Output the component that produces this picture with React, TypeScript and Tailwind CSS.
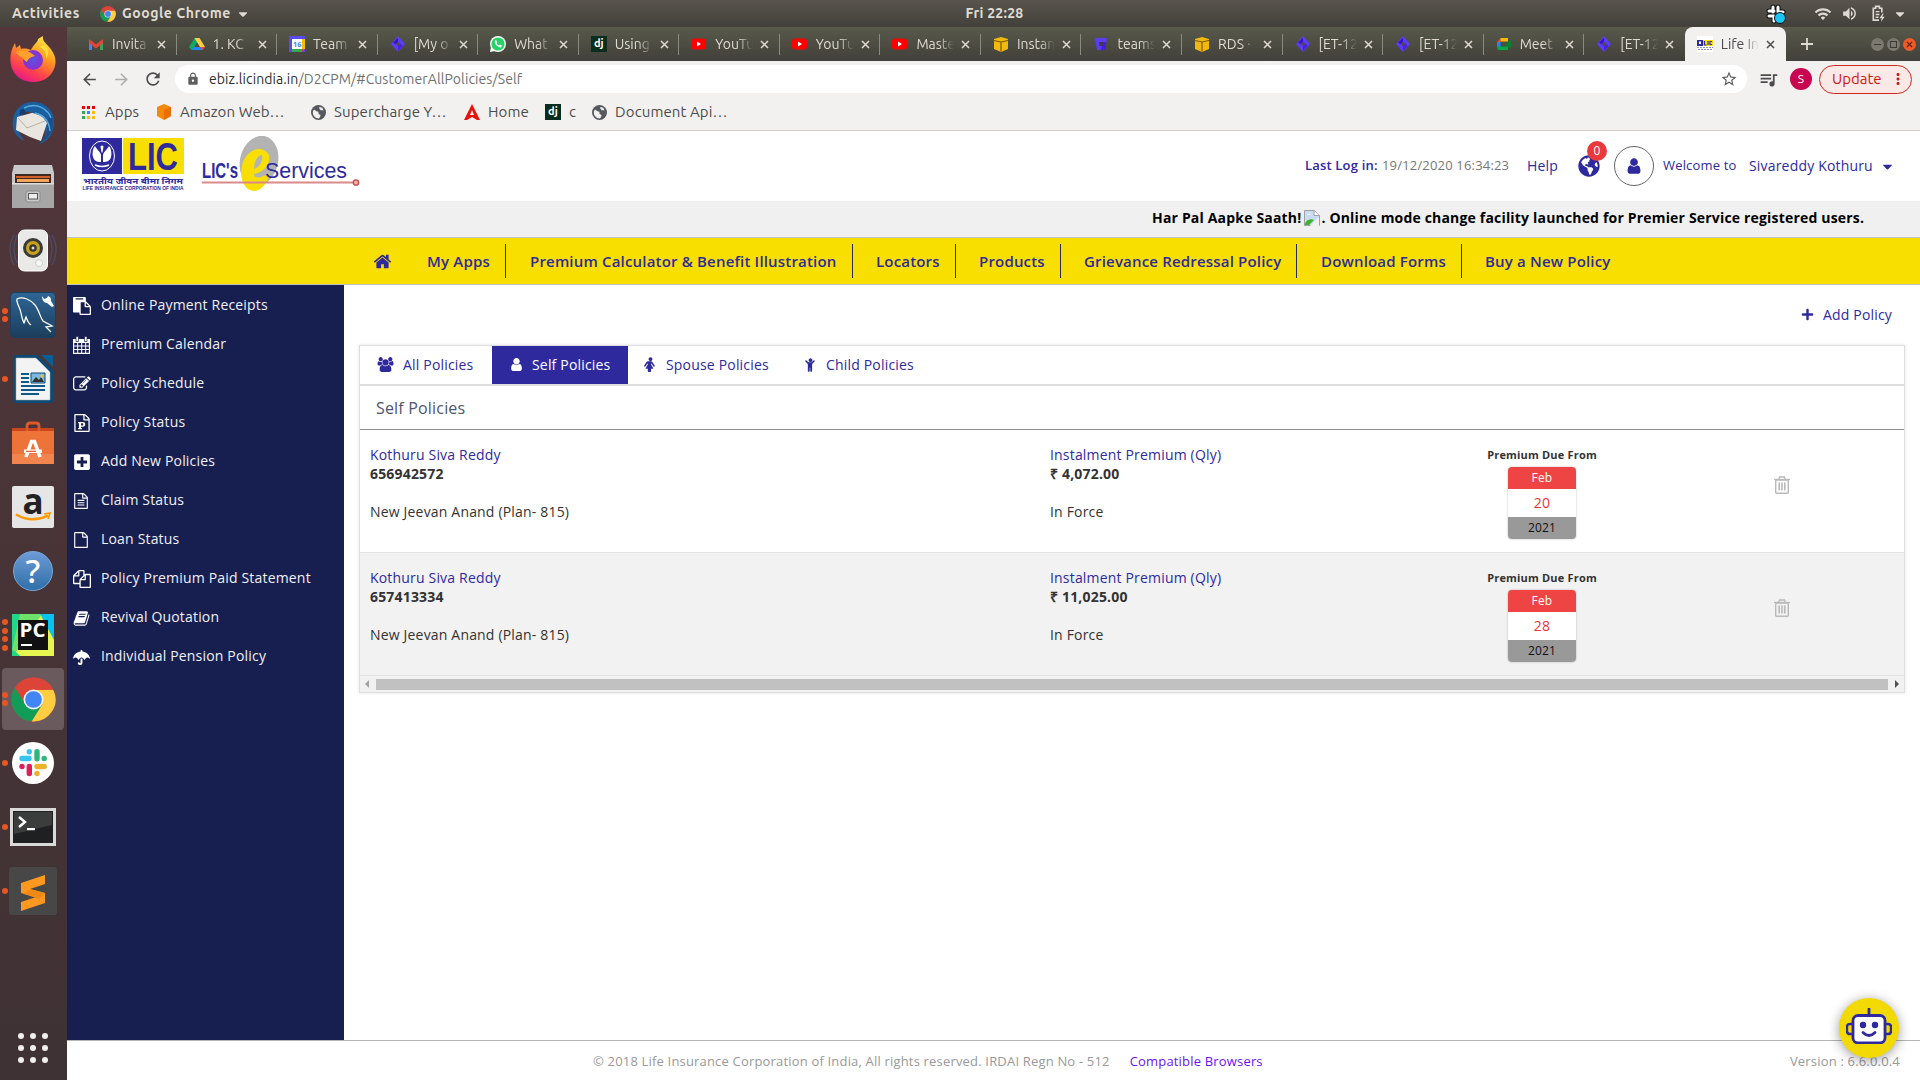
import React from "react";
import { FaUmbrella, FaPlusSquare, FaPlus, FaGlobeAmericas, FaCaretDown } from "react-icons/fa";
import { MdLock, MdStarBorder, MdQueueMusic, MdMoreVert, MdArrowBack, MdArrowForward, MdRefresh, MdWifi, MdVolumeUp } from "react-icons/md";

const UI = "font-['Ubuntu','Noto_Sans',sans-serif]";
const PAGE = "font-['Open_Sans','Noto_Sans_CJK_SC',sans-serif]";

/* ---------- shared 1792-grid glyphs ---------- */
const glyphs = {
  book: "M1703 478q40 57 18 129l-275 906q-19 64-76.500 107.500t-122.500 43.500h-923q-77 0-148.500-53.500t-99.500-131.500q-24-67-2-127 0-4 3-27t4-37q1-8-3-21.500t-3-19.500q2-11 8-21t16.500-23.500 16.500-23.500q23-38 45-91.500t30-91.500q3-10 .5-30t-.5-28q3-11 17-28t17-23q21-36 42-92t25-90q1-9-2.500-32t.5-28q4-13 22-30.500t22-22.500q19-26 42.500-84.500t27.500-96.500q1-8-3-25.500t-2-26.500q2-8 9-18t18-23 17-21q8-12 16.500-30.500t15-35 16-36 19.500-32 26.500-23.500 36-11.500 47.500 5.500l-1 3q38-9 51-9h761q74 0 114 56t18 130l-274 906q-36 119-71.500 153.500t-128.500 34.500h-869q-27 0-38 15-11 16-1 43 24 70 144 70h923q29 0 56-15.500t35-41.500l300-987q7-22 5-57 38 15 59 43zm-1064 2q-4 13 2 22.500t20 9.500h608q13 0 25.500-9.500t16.500-22.500l21-64q4-13-2-22.500t-20-9.500h-608q-13 0-25.500 9.500t-16.500 22.500zm-83 256q-4 13 2 22.500t20 9.500h608q13 0 25.500-9.500t16.500-22.500l21-64q4-13-2-22.500t-20-9.500h-608q-13 0-25.500 9.500t-16.500 22.500z",
  file: "M1596 380q28 28 48 76t20 88v1152q0 40-28 68t-68 28h-1344q-40 0-68-28t-28-68v-1600q0-40 28-68t68-28h896q40 0 88 20t76 48zm-444-244v376h376q-10-29-22-41l-313-313q-12-12-41-22zm384 1528v-1024h-416q-40 0-68-28t-28-68v-416h-768v1536h1280z",
  fileText: "M1596 380q28 28 48 76t20 88v1152q0 40-28 68t-68 28h-1344q-40 0-68-28t-28-68v-1600q0-40 28-68t68-28h896q40 0 88 20t76 48zm-444-244v376h376q-10-29-22-41l-313-313q-12-12-41-22zm384 1528v-1024h-416q-40 0-68-28t-28-68v-416h-768v1536h1280zm-1024-864q0-14 9-23t23-9h704q14 0 23 9t9 23v64q0 14-9 23t-23 9h-704q-14 0-23-9t-9-23v-64zm736 224q14 0 23 9t9 23v64q0 14-9 23t-23 9h-704q-14 0-23-9t-9-23v-64q0-14 9-23t23-9h704zm0 256q14 0 23 9t9 23v64q0 14-9 23t-23 9h-704q-14 0-23-9t-9-23v-64q0-14 9-23t23-9h704z",
  copy: "M1696 384q40 0 68 28t28 68v1216q0 40-28 68t-68 28h-960q-40 0-68-28t-28-68v-288h-544q-40 0-68-28t-28-68v-672q0-40 20-88t48-76l408-408q28-28 76-48t88-20h416q40 0 68 28t28 68v328q68-40 128-40h416zm-544 213l-299 299h299v-299zm-640-384l-299 299h299v-299zm196 647l316-316v-416h-384v416q0 40-28 68t-68 28h-416v640h512v-256q0-40 20-88t48-76zm956 804v-1152h-384v416q0 40-28 68t-68 28h-416v640h896z",
  paste: "M768 1664h896v-640h-416q-40 0-68-28t-28-68v-416h-384v1152zm256-1440v-64q0-13-9.500-22.500t-22.500-9.500h-704q-13 0-22.500 9.500t-9.500 22.500v64q0 13 9.500 22.500t22.500 9.500h704q13 0 22.500-9.500t9.500-22.500zm256 672h299l-299-299v299zm512 128v672q0 40-28 68t-68 28h-960q-40 0-68-28t-28-68v-160h-544q-40 0-68-28t-28-68v-1344q0-40 28-68t68-28h1088q40 0 68 28t28 68v328q21 13 36 28l408 408q28 28 48 76t20 88z",
  edit: "M888 1184l116-116-152-152-116 116v56h96v96h56zm440-720q-16-16-33 1l-350 350q-17 17-1 33t33-1l350-350q17-17 1-33zm80 594v190q0 119-84.500 203.500t-203.500 84.500h-832q-119 0-203.500-84.500t-84.500-203.500v-832q0-119 84.500-203.500t203.500-84.500h832q63 0 117 25 15 7 18 23 3 17-9 29l-49 49q-14 14-32 8-23-6-45-6h-832q-66 0-113 47t-47 113v832q0 66 47 113t113 47h832q66 0 113-47t47-113v-126q0-13 9-22l64-64q15-15 35-7t20 29zm-96-738l288 288-672 672h-288v-288zm444 132l-92 92-288-288 92-92q28-28 68-28t68 28l152 152q28 28 28 68t-28 68z",
  user: "M1536 1399q0 109-62.500 187t-150.500 78h-854q-88 0-150.500-78t-62.500-187q0-85 8.500-160.500t31.500-152 58.500-131 94-89 134.500-34.500q131 128 313 128t313-128q76 0 134.500 34.500t94 89 58.500 131 31.500 152 8.500 160.500zm-256-887q0 159-112.500 271.500t-271.500 112.500-271.500-112.500-112.500-271.500 112.500-271.500 271.500-112.500 271.500 112.500 112.500 271.500z",
  female: "M1408 1056q0 40-28 68t-68 28q-51 0-80-43l-227-341h-45v132l247 411q9 15 9 33 0 26-19 45t-45 19h-192v272q0 46-33 79t-79 33h-160q-46 0-79-33t-33-79v-272h-192q-26 0-45-19t-19-45q0-18 9-33l247-411v-132h-45l-227 341q-29 43-80 43-40 0-68-28t-28-68q0-29 16-53l256-384q73-107 176-107h384q103 0 176 107l256 384q16 24 16 53zm-288-800q0 93-65.500 158.500t-158.500 65.500-158.500-65.500-65.500-158.500 65.500-158.500 158.500-65.500 158.500 65.500 65.500 158.500z",
  child: "M1380 548l-292 292v824q0 46-33 79t-79 33-79-33-33-79v-384h-64v384q0 46-33 79t-79 33-79-33-33-79v-824l-292-292q-28-28-28-68t28-68q29-28 68.500-28t67.500 28l228 228h368l228-228q28-28 68-28t68 28q28 29 28 68.500t-28 67.500zm-260-164q0 93-65.500 158.500t-158.500 65.500-158.500-65.500-65.500-158.500 65.500-158.500 158.500-65.500 158.500 65.500 65.500 158.500z",
  users: "M657 896q-162 5-265 128h-134q-82 0-138-40.500t-56-118.500q0-353 124-353 6 0 43.500 21t97.500 42.500 119 21.500q67 0 133-23-5 37-5 66 0 159 90 283zm1071 637q0 120-73 189.500t-194 69.500h-874q-121 0-194-69.500t-73-189.500q0-53 3.500-103.500t14-109 26.500-108.500 43-97.500 62-81 85.500-53.500 111.500-20q10 0 43 21.500t73 48 107 48 135 21.500 135-21.500 107-48 73-48 43-21.500q61 0 111.500 20t85.500 53.500 62 81 43 97.500 26.500 108.500 14 109 3.500 103.500zm-1024-1277q0 106-75 181t-181 75-181-75-75-181 75-181 181-75 181 75 75 181zm704 384q0 159-112.500 271.500t-271.500 112.500-271.500-112.500-112.500-271.500 112.500-271.500 271.500-112.500 271.500 112.500 112.500 271.500zm576 225q0 78-56 118.500t-138 40.500h-134q-103-123-265-128 90-124 90-283 0-29-5-66 66 23 133 23 59 0 119-21.500t97.500-42.500 43.500-21q124 0 124 353zm-128-609q0 106-75 181t-181 75-181-75-75-181 75-181 181-75 181 75 75 181z",
  home: "M1472 992v480q0 26-19 45t-45 19h-384v-384h-256v384h-384q-26 0-45-19t-19-45v-480q0-1 .5-3t.5-3l575-474 575 474q1 2 1 6zm223-69l-62 74q-8 9-21 11h-3q-13 0-21-7l-692-577-692 577q-12 8-24 7-13-2-21-11l-62-74q-8-10-7-23.500t11-21.500l719-599q32-26 76-26t76 26l244 204v-195q0-14 9-23t23-9h192q14 0 23 9t9 23v408l219 182q10 8 11 21.500t-7 23.500z",
};
const Glyph = ({ d, className = "", box = "0 0 1792 1792" }: { d: string; className?: string; box?: string }) => (
  <svg viewBox={box} fill="currentColor" className={className}><path d={d} /></svg>
);

const T = ({ className = "", children }: { className?: string; children: React.ReactNode }) => (
  <span className={"whitespace-nowrap " + className}>{children}</span>
);

/* ---------- GNOME top bar ---------- */
const ChromeLogo = ({ className = "" }: { className?: string }) => (
  <svg viewBox="0 0 48 48" className={className}>
    <circle cx="24" cy="24" r="23.500" fill="#db4437" />
    <path d="M24 24 4.100 11.500A23.500 23.500 0 0 0 22 47.400L34 30z" fill="#0f9d58" />
    <path d="M24 13.500H45A23.500 23.500 0 0 1 22 47.400L33.500 29z" fill="#ffcd40" />
    <path d="M4.100 11.500A23.500 23.500 0 0 1 45 13.500H24L14 27z" fill="#db4437" />
    <circle cx="24" cy="24" r="10.700" fill="#f1f1f1" />
    <circle cx="24" cy="24" r="8.900" fill="#4285f4" />
  </svg>
);

const TopBar = () => (
  <div className={`${UI} relative flex h-[27px] shrink-0 items-center bg-linear-to-b from-[#59554d] to-[#42403a] text-[14px] font-bold tracking-[0.55px] text-[#dfdbd2]`}>
    <div className="w-[100px] pl-3"><T>Activities</T></div>
    <ChromeLogo className="size-4" />
    <div className="ml-[6px]"><T>Google Chrome</T></div>
    <FaCaretDown className="ml-[5px] size-[14px]" />
    <div className="absolute inset-x-0 flex justify-center pl-[69px] tracking-[0.25px]"><T>Fri 22:28</T></div>
    <div className="ml-auto flex items-center pr-[13px]">
      <svg viewBox="0 0 20 20" className="mr-[28px] size-5">
        <g stroke="#111" strokeWidth="5" strokeLinecap="round"><path d="M7 3v5M3 12h5M12 3v5M8 13v4M13 8h4M3 7h5" /></g>
        <g stroke="#fff" strokeWidth="3" strokeLinecap="round"><path d="M7 3v5M3 12h5M12 3v5M8 13v4M13 8h4M3 7h5" /></g>
        <circle cx="14" cy="14" r="5.500" fill="#1bc5f5" stroke="#111" />
      </svg>
      <MdWifi className="mr-[9px] size-[18px]" />
      <MdVolumeUp className="mr-[13px] size-[17px]" />
      <svg viewBox="0 0 15 18" className="mr-[7px] h-[17px] w-[15px]" fill="none" stroke="currentColor">
        <path d="M11 8V3.500H8.500V1.500h-4v2H2V16h6" strokeWidth="1.700" /><path d="M4.500 7h4M4.500 10h4M4.500 13h3" strokeWidth="1.500" />
        <path d="m12 9-3.500 5h2.500l-1 4 4-5.500h-2.500l1.500-3.500z" fill="currentColor" stroke="none" />
      </svg>
      <FaCaretDown className="size-[14px]" />
    </div>
  </div>
);

/* ---------- dock ---------- */
const Firefox = () => (
  <svg viewBox="0 0 48 48" className="size-[48px]">
    <defs>
      <linearGradient id="ffo" x1=".8" y1="0" x2=".3" y2="1"><stop offset="0" stopColor="#fff14a" /><stop offset=".4" stopColor="#ff9a1f" /><stop offset=".75" stopColor="#ff4050" /><stop offset="1" stopColor="#e3168a" /></linearGradient>
      <radialGradient id="ffp"><stop offset="0" stopColor="#5b52e0" /><stop offset="1" stopColor="#8b2fd0" /></radialGradient>
    </defs>
    <path d="M34 1C33 6 37 8 41 13c4 5 6 10 5.500 15C45 40 36 47 24 47 11 47 2 38 1.500 26 1 19 3 13 6 8l1 5 4-3 1 4c4-1 8 0 10 1 2-5 7-8 7-11z" fill="url(#ffo)" />
    <circle cx="24" cy="25" r="10" fill="url(#ffp)" />
    <path d="M7 17c5-3 12-1 15 1l4 3c-5 1-7 3-8 6-2-1-4-3-5-5-2 0-5-3-6-5z" fill="#ffa12b" />
    <path d="M30 12c5 1 8 6 7 12 3-4 3-9-1-14z" fill="#ffdd3c" />
  </svg>
);
const Thunderbird = () => (
  <svg viewBox="0 0 48 48" className="size-[48px]">
    <path d="M4 20C6 9 14 2 26 3c12 1 20 10 19 22-1 11-7 18-15 20 6-5 7-10 6-17L22 10C14 13 8 20 9 30c1 5 4 9 7 12C7 39 2 30 4 20z" fill="#1d5f9e" />
    <path d="m8 18 22-6 8 12-6 18-11-4L7 31z" fill="#e9e6e0" />
    <path d="m9 19 9 10 18-7" fill="none" stroke="#b5b0a8" />
    <path d="M12 11C17 2 30 1 38 8c8 8 8 20 3 28 0-11-4-18-14-21-6-2-11-3-15-4z" fill="#1b5e9f" />
    <path d="M41 14c6 10 3 24-11 31 7-7 9-14 8-21z" fill="#1a5089" />
    <path d="M15 9c7-4 18-3 23 4M26 14c9 2 14 8 15 18M20 7c9-2 19 3 22 12" fill="none" stroke="#54a6dc" strokeWidth="1.500" />
    <path d="m11 11 4-1 2 5-6 1z" fill="#123e70" />
  </svg>
);
const Files = () => (
  <svg viewBox="0 0 44 44" className="size-[44px]">
    <path d="M3 0h38l2 8v35H1V8z" fill="#c8c8c8" />
    <path d="M4 9h36v9H4z" fill="#3f2a20" /><path d="M5 11h34v2H5z" fill="#d2602a" /><path d="M6 14h32v3H6z" fill="#f2a35c" />
    <path d="M1 18h42v25H1z" fill="#a6a6a6" /><path d="M1 18h42v1.500H1z" fill="#ddd" />
    <rect x="15" y="26" width="14" height="11" rx="2" fill="#c9c9c9" stroke="#8b8b8b" />
    <rect x="17.500" y="28.500" width="9" height="5.500" fill="#eee" stroke="#555" />
  </svg>
);
const Speaker = () => (
  <svg viewBox="0 0 48 48" className="size-[48px]">
    <g fill="none" stroke="#4c5f8d" strokeWidth="1.500" opacity=".5"><path d="M5 8q-8 14 0 30M8 8q-6 14 0 28M43 8q8 14 0 30M40 8q6 14 0 28" /></g>
    <rect x="9.500" y="3" width="29" height="41" rx="6" fill="#e9e9e7" stroke="#fff" />
    <circle cx="24" cy="21" r="10" fill="#3a3a38" /><circle cx="24" cy="21" r="7" fill="#c9a21c" /><circle cx="24" cy="21" r="3.800" fill="#333" /><circle cx="24" cy="21" r="1.500" fill="#ddd" />
    <circle cx="30" cy="36" r="3.500" fill="#f7f7f7" stroke="#ccc" />
  </svg>
);
const Workbench = () => (
  <svg viewBox="0 0 46 46" className="size-[46px]">
    <defs><linearGradient id="wb" x2="0" y2="1"><stop stopColor="#2e6696" /><stop offset="1" stopColor="#1c3e5c" /></linearGradient></defs>
    <rect x=".5" y=".5" width="45" height="45" rx="4" fill="url(#wb)" stroke="#1c3f5f" />
    <path d="M21 33c-3-2-4-5-5-8-1 2-1 4-2 6-3-5-2-10-5-16-1-3-3-5-2-8 6-3 14 1 18 6 4 5 5 12 8 16l9 5-6 1 5 5" fill="none" stroke="#fff" strokeWidth="1.300" />
    <path d="m32 4 2 3 3-1 1-2c3 1 3 3 3 5l3 5-2 1-5-4c-3 0-5-3-5-7z" fill="#fff" />
  </svg>
);
const Writer = () => (
  <svg viewBox="0 0 40 48" className="h-[48px] w-[40px]">
    <path d="M3 0h21l16 15v30a3 3 0 0 1-3 3H3a3 3 0 0 1-3-3V3a3 3 0 0 1 3-3z" fill="#0c4a78" />
    <path d="M28 0h12v12z" fill="#0a5c95" /><path d="M3 3h20l14 14v28H3z" fill="#f3f3f3" stroke="#aaa" strokeWidth=".5" />
    <path d="M8 18h8v2H8zM8 22h8v2H8zM8 26h8v2H8zM8 30h24v2H8zM8 34h24v2H8zM8 38h18v2H8z" fill="#0c5a8d" />
    <path d="M18 18h14v10H18z" fill="#7db9df" stroke="#0c4a78" /><path d="m19 27 4-5 3 3 2-3 3 5z" fill="#333" /><circle cx="29" cy="21" r="1.500" fill="#f8c03a" />
  </svg>
);
const Software = () => (
  <svg viewBox="0 0 42 44" className="h-[44px] w-[42px]">
    <path d="M0 7h42v4H0z" fill="#c8461d" /><path d="M15 13V5q0-3 3-3h6q3 0 3 3v8" fill="none" stroke="#dd5a28" strokeWidth="2.800" />
    <path d="M0 10h42v33H0z" fill="#ee7338" /><path d="M0 33h42v10H0z" fill="#f2844d" />
    <path d="m14 36 5.500-15.500h3L28 36" fill="none" stroke="#fff" strokeWidth="3.600" /><path d="M12 28.500h18v3.500H12z" fill="#fff" /><path d="M14 29.700h10v1.300H14z" fill="#e9612b" />
  </svg>
);
const Amazon = () => (
  <div className="relative flex size-[42px] justify-center rounded-[2px] bg-[#e6e6e6] font-['Open_Sans',sans-serif] text-[35px] leading-[30px] font-bold text-[#222]">
    a
    <svg viewBox="0 0 42 42" className="absolute inset-0 size-[42px]"><path d="M4 28.500q16 9 32 1" fill="none" stroke="#f90" strokeWidth="2.500" /><path d="m32 28 6-1-2 6" fill="none" stroke="#f90" strokeWidth="1.700" /></svg>
  </div>
);
const Help = () => (
  <div className="flex size-[40px] items-center justify-center rounded-full border border-[#79a7d8] bg-linear-to-b from-[#6c9bd6] to-[#2f6fa8] font-['Noto_Sans',sans-serif] text-[33px] font-medium text-white">?</div>
);
const PyCharm = () => (
  <svg viewBox="0 0 42 42" className="size-[42px]">
    <path d="M0 0h42v42H0z" fill="#21d789" /><path d="M8 0h22l12 26v16H12L0 36z" fill="#6fe06a" /><path d="M30 0 42 22v20H8l-4-4z" fill="#fcf84a" opacity=".85" /><path d="M28 0h14v26z" fill="#07c3f2" />
    <path d="M6 6h30v30H6z" fill="#111" />
    <text x="7.500" y="22.500" fontFamily="Open Sans" fontSize="19" fontWeight="700" fill="#fff" textLength="26" lengthAdjust="spacingAndGlyphs" letterSpacing="0">PC</text>
    <path d="M9 30h11v2H9z" fill="#fff" />
  </svg>
);
const Slack = () => (
  <svg viewBox="0 0 42 42" className="size-[42px]">
    <circle cx="21" cy="21" r="21" fill="#fff" />
    <g strokeWidth="5.400" strokeLinecap="round">
      <path d="M10 16.500h7" stroke="#36c5f0" /><path d="M17.300 9.700v.01" stroke="#36c5f0" />
      <path d="M25 9.700v7" stroke="#2eb67d" /><path d="M32.200 16.500h.01" stroke="#2eb67d" />
      <path d="M25 24.500h7.200" stroke="#ecb22e" /><path d="M25 31.500v.01" stroke="#ecb22e" />
      <path d="M17.300 24.500v7" stroke="#e01e5a" /><path d="M10 24.500h.01" stroke="#e01e5a" />
    </g>
  </svg>
);
const Terminal = () => (
  <svg viewBox="0 0 46 38" className="h-[38px] w-[46px]">
    <path d="M0 0h46v38H0z" fill="#d9d9d9" /><path d="M3 3h40v32H3z" fill="#1f2021" /><path d="M4 4h38v13L4 26z" fill="#3b3d3d" />
    <path d="m9 9 6 5-6 5" fill="none" stroke="#fff" strokeWidth="2.400" /><path d="M17 20h8v2.200h-8z" fill="#fff" />
  </svg>
);
const Sublime = () => (
  <svg viewBox="0 0 48 48" className="size-[48px]">
    <rect width="48" height="48" rx="3" fill="#474747" />
    <path d="m12 16 24-8v9l-15 5 15 4v10l-24 8v-9l15-5-15-4z" fill="#ff9820" /><path d="m21 22 15 4-6 6-15-5z" fill="#f08a14" />
  </svg>
);
const dock: { icon: React.ReactNode; dots: number; active?: boolean }[] = [
  { icon: <Firefox />, dots: 0 }, { icon: <Thunderbird />, dots: 0 }, { icon: <Files />, dots: 0 }, { icon: <Speaker />, dots: 0 },
  { icon: <Workbench />, dots: 2 }, { icon: <Writer />, dots: 1 }, { icon: <Software />, dots: 0 }, { icon: <Amazon />, dots: 0 },
  { icon: <Help />, dots: 0 }, { icon: <PyCharm />, dots: 4 }, { icon: <ChromeLogo className="size-[45px]" />, dots: 2, active: true },
  { icon: <Slack />, dots: 1 }, { icon: <Terminal />, dots: 1 }, { icon: <Sublime />, dots: 1 },
];
const Dock = () => (
  <div className="flex w-[67px] shrink-0 flex-col bg-linear-to-b from-[#52363a] to-[#3e3234]">
    {dock.map((d, i) => (
      <div key={i} className="relative flex h-[64px] w-[67px] items-center justify-center pr-px">
        {d.active && <div className="absolute top-px left-[2px] h-[62px] w-[62px] rounded-[4px] bg-[#6b5a5d]" />}
        <div className="absolute inset-y-0 left-[2px] flex flex-col justify-center gap-[2.400px]">
          {Array.from({ length: d.dots }, (_, k) => <i key={k} className="size-[6px] rounded-full bg-[#e95420]" />)}
        </div>
        <div className="relative">{d.icon}</div>
      </div>
    ))}
    <div className="mt-auto mb-[17px] grid grid-cols-3 gap-[6px] self-center pr-px">
      {Array.from({ length: 9 }, (_, k) => <i key={k} className="size-[6px] rounded-full bg-[#f2f0ee]" />)}
    </div>
  </div>
);

/* ---------- favicons ---------- */
const Fav = {
  gmail: <svg viewBox="0 0 16 16" className="size-4"><path d="M1 14V4l3 2v8z" fill="#4285f4" /><path d="M12 6l3-2v10h-3z" fill="#34a853" /><path d="m1 3 7 5.500L15 3v4l-7 5.500L1 7z" fill="#ea4335" /></svg>,
  drive: <svg viewBox="0 0 16 16" className="size-4"><path d="M5.500 2h5L5 12l-2.500 2L0 11z" fill="#11a861" /><path d="M5.500 2h5L16 11h-5z" fill="#ffcf48" /><path d="M5 11h11l-2.500 3h-11z" fill="#2684fc" /><path d="M11 11h5l-2.500 3z" fill="#ea4335" /></svg>,
  cal: <svg viewBox="0 0 16 16" className="size-4"><path d="M0 0h16v16H0z" fill="#5a4af5" /><path d="M13 3h3v10h-3z" fill="#fbbc04" /><path d="M3 13h10v3H3z" fill="#34a853" /><path d="M13 13h3l-3 3z" fill="#ea4335" /><path d="M3 3h10v10H3z" fill="#fff" /><text x="4" y="11" fontSize="7.500" fontWeight="700" fontFamily="Open Sans" fill="#4285f4">16</text></svg>,
  jira: <svg viewBox="0 0 16 16" className="size-4"><path d="m8 0 7 8-7 8-7-8z" fill="#5a3df5" /><path d="m8 5.500 2.200 2.500L8 10.500 5.800 8z" fill="#4b4a43" /><path d="m8 5.500-2.500 2.700L3 6.500 8 2z" fill="#3a12c5" /><path d="m8 10.500 3-3 1.500 3L8 15z" fill="#4a20e0" /></svg>,
  wa: <svg viewBox="0 0 16 16" className="size-4"><circle cx="8" cy="8" r="8" fill="#fff" /><path d="m0 16 1-5 4 4z" fill="#fff" /><circle cx="8" cy="8" r="6.600" fill="#25d366" /><path d="M5 4.500c-1 3 2.500 7 6 7l1-2-2-1-1 1C8 9 7 8 6.500 7l.7-1L6 4z" fill="#fff" /></svg>,
  dj: <span className="flex size-4 shrink-0 items-center justify-center bg-[#092e20] pb-[2px] text-[11px] leading-none font-bold text-white">dj</span>,
  yt: <svg viewBox="0 0 16 16" className="size-4"><rect x="0" y="2.500" width="15" height="11" rx="3" fill="#f00" /><path d="m6 5.500 4 2.500-4 2.500z" fill="#fff" /></svg>,
  aws: <svg viewBox="0 0 16 16" className="size-4"><path d="m8 1 7 2v10l-7 3-7-3V3z" fill="#f2b90d" /><path d="M1 4.500 8 6l7-1.500M8 6v9.500" fill="none" stroke="#7a5b00" strokeWidth="1.200" /></svg>,
  bb: <svg viewBox="0 0 16 16" className="size-4"><path d="M2 2h12l-2 12H4z" fill="#5a3df5" /><path d="M6 6h4l-.6 4H6.600z" fill="#3d3c36" /><path d="M10 6h3.300L12 14H8z" fill="#3a12c5" opacity=".7" /></svg>,
  meet: <svg viewBox="0 0 16 16" className="size-4"><path d="M1 6h3.500v5H1z" fill="#2684fc" /><path d="m1 6 3.500-4v4z" fill="#ea4335" /><path d="M4.500 2H12v3.500H4.500z" fill="#ffba00" /><path d="M1 10.500h11V14H2z" fill="#00ac47" /><path d="m10 8 5-4.500v9.500l-5-4z" fill="#00832d" /></svg>,
  lic: <svg viewBox="0 0 16 16" className="size-4"><path d="M0 0h16v16H0z" fill="#fff" /><path d="M0 4h6v6H0z" fill="#2e2a9e" /><path d="M6 4h10v6H6z" fill="#f9e000" /><path d="M2 5.500h2v2.500H2z" fill="#fff" /><path d="M7.500 5v4h2M11 5v4M15 5.500h-2v3h2" fill="none" stroke="#2e2a9e" strokeWidth="1.200" /><path d="M0 11.500h16M1 13.500h14" stroke="#8f8cc8" strokeDasharray="2 1" /></svg>,
};
const tabs: [React.ReactNode, string][] = [
  [Fav.gmail, "Invita"], [Fav.drive, "1. KC"], [Fav.cal, "Team"], [Fav.jira, "[My o"], [Fav.wa, "What"], [Fav.dj, "Using"],
  [Fav.yt, "YouTu"], [Fav.yt, "YouTu"], [Fav.yt, "Maste"], [Fav.aws, "Instan"], [Fav.bb, "teams"], [Fav.aws, "RDS ·"],
  [Fav.jira, "[ET-12"], [Fav.jira, "[ET-12"], [Fav.meet, "Meet"], [Fav.jira, "[ET-12"], [Fav.lic, "Life In"],
];
const X = () => <svg viewBox="0 0 9 9" className="size-[9px]"><path d="m1 1 7 7M8 1 1 8" stroke="currentColor" strokeWidth="1.500" /></svg>;

const TabStrip = () => (
  <div className={`${UI} flex h-[34px] bg-linear-to-b from-[#585a4b] to-[#42403a] pl-[9px] text-[14px] text-[#dfdbd2]`}>
    {tabs.map(([icon, name], i) => {
      const active = i === tabs.length - 1;
      return (
        <div key={i} className={active ? "flex h-[34px] w-[101px] items-center rounded-t-[8px] bg-[#f2f1f0] pl-[12px] text-[#4c4c4c]" : "relative flex h-[34px] w-[100.550px] items-center pl-[12px]"}>
          {icon}
          <span className="ml-2 w-[38px] overflow-hidden [mask-image:linear-gradient(to_right,black_60%,transparent)] whitespace-nowrap">{name}</span>
          <span className="ml-[7px]"><X /></span>
          {i < tabs.length - 2 && <i className="absolute top-[7px] right-0 h-[21px] w-px bg-[#8b8a80]" />}
        </div>
      );
    })}
    <div className="flex w-[43px] items-center justify-center"><svg viewBox="0 0 12 12" className="size-3"><path d="M6 0v12M0 6h12" stroke="currentColor" strokeWidth="1.800" /></svg></div>
    <div className="mr-1 ml-auto flex items-center gap-[3px]">
      <i className="flex size-[13px] items-center justify-center rounded-full bg-[#7a786f]"><i className="h-px w-[7px] bg-[#3a3934]" /></i>
      <i className="flex size-[13px] items-center justify-center rounded-full bg-[#7a786f]"><i className="size-[7px] border border-[#3a3934]" /></i>
      <i className="flex size-[13px] items-center justify-center rounded-full bg-[#ef5a29] text-[#52200e]"><svg viewBox="0 0 8 8" className="size-[7px]"><path d="m1 1 6 6M7 1 1 7" stroke="currentColor" strokeWidth="1.300" /></svg></i>
    </div>
  </div>
);

const Toolbar = () => (
  <div className={`${UI} flex h-[36px] items-center bg-[#f2f1f0] pr-2 pl-[13px] text-[14px]`}>
    <MdArrowBack className="size-[19px] text-[#4c4c4c]" />
    <MdArrowForward className="ml-[13px] size-[19px] text-[#adadad]" />
    <MdRefresh className="ml-[12px] size-[20px] text-[#4c4c4c]" />
    <div className="ml-[12px] flex h-[28px] w-[1572px] items-center rounded-full bg-white">
      <MdLock className="ml-[11px] size-[14px] text-[#5f5f5f]" />
      <T className="ml-[9px] tracking-[0.1px] text-[#707070]"><span className="text-[#2e2e2e]">ebiz.licindia.in</span>/D2CPM/#CustomerAllPolicies/Self</T>
      <MdStarBorder className="mr-[9px] ml-auto size-[18px] text-[#5f5f5f]" />
    </div>
    <MdQueueMusic className="ml-[11px] size-[21px] text-[#4c4c4c]" />
    <div className="ml-[11px] flex size-[22px] items-center justify-center rounded-full bg-[#c8054f] text-[12px] text-white">S</div>
    <div className="ml-auto flex h-[29px] w-[93px] items-center rounded-full border border-[#d0281c] bg-[#fbe9e8] pl-3 text-[15px] text-[#d0150c]">
      <T>Update</T><MdMoreVert className="ml-[7px] size-[18px]" />
    </div>
  </div>
);
const GlobeMark = () => (
  <svg viewBox="0 0 16 16" className="size-[15px]"><circle cx="8" cy="8" r="8" fill="#55585c" /><path d="M3 5c2 0 2 2 4 2s0 3 2 3 1 3-1 4.500C4 14 1.500 11 2 7zM9 2c-1 2 1 2 1 3s3 0 3.500 1L12 3z" fill="#f2f1f0" /></svg>
);
const Bookmarks = () => (
  <div className={`${UI} flex h-[34px] items-center border-b border-[#cfcfcf] bg-[#f2f1f0] pb-[3px] pl-[15px] text-[15px] tracking-[0.1px] text-[#4c4c4c]`}>
    <div className="grid grid-cols-3 gap-[2px]">
      {["bg-[#e00]", "bg-[#e00]", "bg-[#e00]", "bg-[#34a853]", "bg-[#4285f4]", "bg-[#fbbc04]", "bg-[#34a853]", "bg-[#fbbc04]", "bg-[#fbbc04]"].map((c, i) => <i key={i} className={"size-[3px] " + c} />)}
    </div>
    <T className="mr-[16px] ml-[10px] w-[35px]">Apps</T>
    <svg viewBox="0 0 16 16" className="size-4"><path d="m8 0 7 3v9l-7 4-7-4V3z" fill="#f58a0a" /><path d="m8 6 7-3v9l-7 4z" fill="#e86f00" /></svg>
    <T className="mr-[26px] ml-2 w-[105px]">Amazon Web…</T>
    <GlobeMark />
    <T className="mr-[16px] ml-2 w-[114px]">Supercharge Y…</T>
    <svg viewBox="0 0 16 16" className="size-4"><path d="M8 0 0 16h3l5-3 5 3h3z" fill="#e8120c" /><path d="m8 6-2 5h4z" fill="#f2f1f0" /></svg>
    <T className="mr-[16px] ml-2 w-[41px]">Home</T>
    {Fav.dj}
    <T className="mr-[16px] ml-2">c</T>
    <GlobeMark />
    <T className="ml-2">Document Api…</T>
  </div>
);

/* ---------- site header ---------- */
const LicLogo = () => (
  <svg viewBox="0 0 104 54" className="h-[54px] w-[104px]" letterSpacing="0">
    <path d="M0 0h40v36H0z" fill="#2e2a9e" /><path d="M41 0h61v36H41z" fill="#f9df00" />
    <ellipse cx="20" cy="18" rx="12.500" ry="15" fill="none" stroke="#fff" strokeWidth="1" />
    <path d="M11 19c-1-4 0-9 2-11 1 3 5 5 6 9v7c-4 0-7-1-8-5zM29 19c1-4 0-9-2-11-1 3-5 5-6 9v7c4 0 7-1 8-5z" fill="#fff" /><path d="M13 27q7 3 14 0" stroke="#fff" strokeWidth="1.500" fill="none" />
    <path d="M18.500 8.500q1.500-2 3 0l-1 6h-1z" fill="#fff" />
    <text x="46" y="32" fontFamily="Liberation Sans" fontWeight="700" fontSize="38" fill="#2e2a9e" textLength="50" lengthAdjust="spacingAndGlyphs">LIC</text>
    <text x="1" y="45.500" fontFamily="Noto Sans, Noto Sans Devanagari, sans-serif" fontWeight="700" fontSize="8" fill="#2e2a9e" textLength="100" lengthAdjust="spacingAndGlyphs">भारतीय जीवन बीमा निगम</text>
    <text x="0.500" y="51.500" fontFamily="Liberation Sans" fontWeight="700" fontSize="5" fill="#2e2a9e" textLength="101" lengthAdjust="spacingAndGlyphs">LIFE INSURANCE CORPORATION OF INDIA</text>
  </svg>
);
const EServices = () => (
  <svg viewBox="0 0 160 56" className="h-[56px] w-[160px]" letterSpacing="0">
    <ellipse cx="57" cy="25" rx="19" ry="25.500" transform="rotate(14 57 25)" fill="#b3b3b3" />
    <path fillRule="evenodd" d="M40 30C42 20 50 12 59 13c8 2 10 9 7 15-2 5-8 9-14 10 0 3 3 4 7 3l9-4c-2 10-9 18-16 18-9 0-15-11-12-25zm12 3c6-2 9-8 8-14-4 0-8 6-8 14z" fill="#f9df00" />
    <path d="M0 46.500h151" stroke="#d98a8a" strokeWidth="2" /><circle cx="154" cy="46.500" r="2.700" fill="#f1b0a6" stroke="#c94a4a" strokeWidth="1.300" />
    <text x="0" y="41.500" fontFamily="Liberation Sans" fontWeight="700" fontSize="22" fill="#2e2a9e" textLength="36" lengthAdjust="spacingAndGlyphs">LIC's</text>
    <text x="63" y="41.500" fontFamily="Liberation Sans" fontSize="22.500" fill="#2e2a9e" textLength="82" lengthAdjust="spacingAndGlyphs">Services</text>
  </svg>
);
const SiteHeader = () => (
  <div className="flex h-[70px] bg-white text-[14px] text-[#2e2a9e]">
    <div className="pt-[7px] pl-[15px]"><LicLogo /></div>
    <div className="pt-[5px] pl-[16px]"><EServices /></div>
    <div className="ml-auto flex items-center pr-[25px]">
      <T className="w-[77px] text-[13px] font-semibold">Last Log in:</T>
      <T className="w-[145px] text-[13px] text-[#777]">19/12/2020 16:34:23</T>
      <T className="w-[51px] pb-[2px]">Help</T>
      <span className="relative mr-[14px]"><FaGlobeAmericas className="size-[22px]" /><i className="absolute -top-[14px] left-[9px] flex size-[20px] items-center justify-center rounded-full bg-[#e8393f] text-[12px] text-white not-italic">0</i></span>
      <span className="mr-[9px] flex size-[40px] items-center justify-center rounded-full border border-[#666]"><Glyph d={glyphs.user} className="size-[18px]" /></span>
      <T className="w-[86px] text-[13px]">Welcome to</T>
      <T className="w-[131px] pb-[2px]">Sivareddy Kothuru</T>
      <FaCaretDown className="size-[15px]" />
    </div>
  </div>
);
const BrokenImage = () => (
  <svg viewBox="0 0 16 16" className="mr-px ml-[3px] size-4"><path d="M.5.500h10l5 5v10H.5z" fill="#c8dbf7" stroke="#a0a0a0" /><path d="M1 15c0-5 6-7 9-5l-5 5z" fill="#3fb22e" /><path d="M10 .5v5h5.500" fill="#fff" stroke="#a0a0a0" /><path d="m6 16 9-9v9z" fill="#f0f0f0" /><path d="M3 5q2-3 4 0z" fill="#fff" /></svg>
);
const Marquee = () => (
  <div className="flex h-[36px] items-center bg-[#f0f0f0] pb-[3px] pl-[1085px] text-[14px] font-bold text-black">
    <T>Har Pal Aapke Saath!</T><BrokenImage /><T>. Online mode change facility launched for Premier Service registered users.</T>
  </div>
);
const nav: [string, string][] = [
  ["My Apps", "w-[79px]"], ["Premium Calculator & Benefit Illustration", "w-[347px] pl-[24px]"], ["Locators", "w-[103px] pl-[23px]"],
  ["Products", "w-[105px] pl-[23px]"], ["Grievance Redressal Policy", "w-[236px] pl-[23px]"], ["Download Forms", "w-[165px] pl-[24px]"], ["Buy a New Policy", "pl-[23px]"],
];
const NavBar = () => (
  <div className="flex h-[48px] items-center border-y border-[#c2c2c2] bg-[#f9df00] pl-[306px] text-[15px] font-semibold text-[#2e2a9e]">
    <Glyph d={glyphs.home} className="mr-[35px] size-[19px]" />
    {nav.map(([t, c], i) => (
      <div key={t} className={"flex h-[34px] items-center " + (i < 6 ? "border-r border-[#2c2a6b] " : "") + c}><T>{t}</T></div>
    ))}
  </div>
);

/* ---------- sidebar ---------- */
const CalIcon = () => (
  <svg viewBox="0 0 18 18" className="size-[18px]"><path d="M0 3h17v15H0z" fill="currentColor" /><path d="M1.200 7h3v2.500h-3zM5.200 7h3v2.500h-3zM9.200 7h3v2.500h-3zM13.200 7h2.600v2.500h-2.600zM1.200 10.500h3V13h-3zM5.200 10.500h3V13h-3zM9.200 10.500h3V13h-3zM13.200 10.500h2.600V13h-2.600zM1.200 14h3v2.800h-3zM5.200 14h3v2.800h-3zM9.200 14h3v2.800h-3zM13.200 14h2.600v2.800h-2.600z" fill="#171f51" /><path d="M3 .5h2.500v5H3zM11.500.500H14v5h-2.500z" fill="currentColor" stroke="#171f51" strokeWidth=".7" /></svg>
);
const PFile = () => (
  <svg viewBox="0 0 1792 1792" fill="currentColor" className="size-[18px]"><path d={glyphs.file} /><path fillRule="evenodd" d="M500 800h460q260 0 260 230t-260 230H800v140h90v110H500v-110h90V910h-90zm300 110v240h130q100 0 100-120t-100-120z" /></svg>
);
const menu: [React.ReactNode, string][] = [
  [<Glyph d={glyphs.paste} className="size-[18px]" />, "Online Payment Receipts"],
  [<CalIcon />, "Premium Calendar"],
  [<Glyph d={glyphs.edit} className="size-[18px]" />, "Policy Schedule"],
  [<PFile />, "Policy Status"],
  [<FaPlusSquare className="size-[18px]" />, "Add New Policies"],
  [<Glyph d={glyphs.fileText} className="size-[16px]" />, "Claim Status"],
  [<Glyph d={glyphs.file} className="size-[16px]" />, "Loan Status"],
  [<Glyph d={glyphs.copy} className="size-[18px]" />, "Policy Premium Paid Statement"],
  [<Glyph d={glyphs.book} className="size-[17px]" />, "Revival Quotation"],
  [<FaUmbrella className="size-[17px]" />, "Individual Pension Policy"],
];
const Sidebar = () => (
  <div className="w-[277px] shrink-0 bg-[#171f51] text-[14px] text-[#f0f0f5]">
    {menu.map(([icon, t]) => (
      <div key={t} className="flex h-[39px] items-center pl-[6px]">
        <span className="flex w-[28px] pt-[3px] text-white">{icon}</span><T>{t}</T>
      </div>
    ))}
  </div>
);

/* ---------- policies ---------- */
const Trash = () => (
  <svg viewBox="0 0 16 18" fill="none" stroke="#b9b9b9" className="h-[18px] w-[16px]"><path d="M0 3.500h16" strokeWidth="1.300" /><path d="M4.700 3.500 5.500 1h5l.8 2.500" strokeWidth="1.300" /><rect x="1.700" y="4" width="12.600" height="13.300" rx="1" strokeWidth="1.400" /><path d="M5.200 6.500v8M8 6.500v8M10.800 6.500v8" strokeWidth="1.600" /></svg>
);
const policies = [
  { no: "656942572", amt: "₹ 4,072.00", day: "20" },
  { no: "657413334", amt: "₹ 11,025.00", day: "28" },
];
const Policies = () => (
  <div className="mr-[15px] ml-[15px] border border-[#dedede] text-[14px] shadow-[0_0_3px_rgba(0,0,0,0.12)]">
    <div className="flex h-[38px] text-[#2e2a9e]">
      <div className="flex w-[132px] items-center pb-[2px] pl-[17px]"><Glyph d={glyphs.users} box="0 0 2048 1792" className="mr-[9px] h-[15px] w-[17px]" /><T>All Policies</T></div>
      <div className="flex w-[136px] items-center bg-[#2e2a9e] pb-[2px] pl-[17px] text-white"><Glyph d={glyphs.user} className="mr-[8px] size-[15px]" /><T>Self Policies</T></div>
      <div className="flex w-[160px] items-center pb-[2px] pl-[15px]"><Glyph d={glyphs.female} className="mr-[8px] size-[15px]" /><T>Spouse Policies</T></div>
      <div className="flex items-center pb-[2px] pl-[15px]"><Glyph d={glyphs.child} className="mr-[8px] size-[15px]" /><T>Child Policies</T></div>
    </div>
    <div className="flex h-[46px] items-center border-t-2 border-b border-t-[#dedede] border-b-[#8e8e8e] pl-[16px] text-[16px] text-[#50556b]"><T>Self Policies</T></div>
    {policies.map((p, i) => (
      <div key={p.no} className={"flex h-[123px] border-b border-[#e3e3e3] pt-[15px] leading-[19px] text-[#333] " + (i ? "bg-[#f2f2f2]" : "bg-white")}>
        <div className="flex w-[680px] flex-col pl-[10px]">
          <div><T className="text-[#2e2a9e]">Kothuru Siva Reddy</T></div>
          <div><T className="font-bold">{p.no}</T></div>
          <div className="mt-[19px]"><T>New Jeevan Anand (Plan- 815)</T></div>
        </div>
        <div className="flex w-[448px] flex-col pl-[10px]">
          <div><T className="text-[#2e2a9e]">Instalment Premium (Qly)</T></div>
          <div><T className="font-bold">{p.amt}</T></div>
          <div className="mt-[19px]"><T>In Force</T></div>
        </div>
        <div className="flex w-[108px] flex-col items-center">
          <T className="text-[11px] font-bold">Premium Due From</T>
          <div className="mt-[3px] flex h-[72px] w-[68px] flex-col overflow-hidden rounded-[4px] bg-white text-center text-[12px] shadow-[0_0_2px_rgba(0,0,0,0.3)]">
            <div className="h-[22px] bg-[#ee4444] leading-[22px] text-white">Feb</div>
            <div className="h-[28px] text-[14px] leading-[28px] text-[#ee3333]">{p.day}</div>
            <div className="h-[22px] bg-[#999] leading-[22px] text-[#111]">2021</div>
          </div>
        </div>
        <div className="pt-[31px] pl-[178px]"><Trash /></div>
      </div>
    ))}
    <div className="flex h-[16px] items-center justify-between bg-[#f1f1f1] px-[5px]">
      <i className="border-y-[4px] border-r-[4px] border-y-transparent border-r-[#a3a3a3]" />
      <i className="h-[11px] w-[1512px] bg-[#c1c1c1]" />
      <i className="border-y-[4px] border-l-[4px] border-y-transparent border-l-[#505050]" />
    </div>
  </div>
);

const Footer = () => (
  <div className="relative flex h-[40px] shrink-0 items-center border-t border-[#b5b5b5] bg-white pt-[2px] pl-[526px] text-[13px] text-[#999]">
    <T>© 2018 Life Insurance Corporation of India, All rights reserved. IRDAI Regn No - 512</T>
    <T className="ml-[20px] text-[#6a11f5]">Compatible Browsers</T>
    <T className="mr-[20px] ml-auto">Version : 6.6.0.0.4</T>
    <div className="absolute -top-[43px] right-[21px] flex size-[60px] items-center justify-center rounded-full bg-[#f2da00] shadow-[0_2px_12px_rgba(0,0,0,0.4)]">
      <svg viewBox="0 0 46 36" className="mb-[4px] h-[36px] w-[46px]" fill="none" stroke="#2e2a9e" strokeWidth="2.800">
        <path d="M23 1v6" strokeLinecap="round" /><path d="M7 16H4q-3 0-3 3v4q0 3 3 3h3M39 16h3q3 0 3 3v4q0 3-3 3h-3" strokeWidth="2.400" />
        <rect x="7" y="7.500" width="32" height="27.500" rx="5" fill="#fff" />
        <circle cx="17" cy="17" r="1.800" fill="#2e2a9e" /><circle cx="29" cy="17" r="1.800" fill="#2e2a9e" />
        <path d="M17 24.500q6 6 12 0" strokeLinecap="round" />
      </svg>
    </div>
  </div>
);

export default function App() {
  return (
    <div className={`${PAGE} flex h-[1080px] w-[1920px] flex-col overflow-hidden bg-white`}>
      <TopBar />
      <div className="flex min-h-0 flex-1">
        <Dock />
        <div className="flex min-w-0 flex-1 flex-col">
          <TabStrip /><Toolbar /><Bookmarks />
          <div className="flex min-h-0 flex-1 flex-col tracking-[0.18px]">
            <SiteHeader /><Marquee /><NavBar />
            <div className="flex min-h-0 flex-1">
              <Sidebar />
              <div className="flex-1">
                <div className="flex h-[60px] items-center justify-end pr-[28px] pb-[2px] text-[14px] text-[#2e2a9e]"><FaPlus className="mr-[9px] size-[13px]" /><T>Add Policy</T></div>
                <Policies />
              </div>
            </div>
            <Footer />
          </div>
        </div>
      </div>
    </div>
  );
}
